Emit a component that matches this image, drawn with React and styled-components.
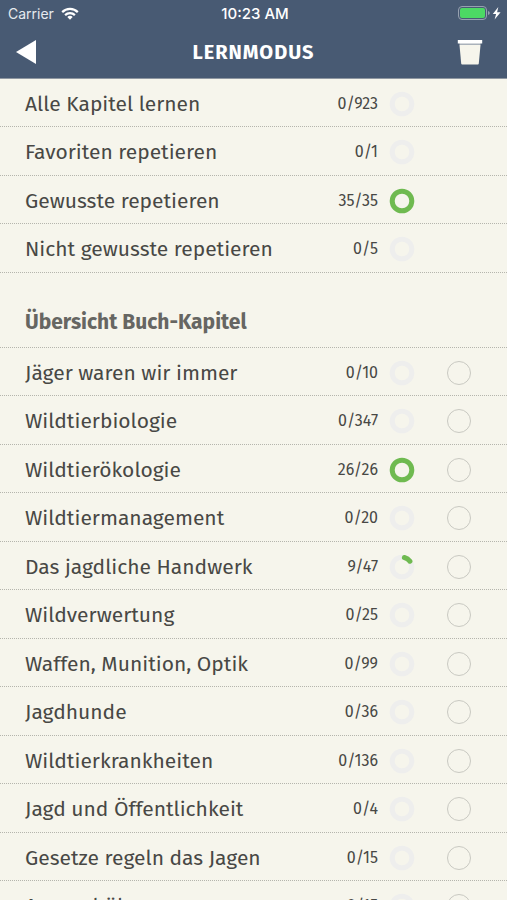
import { useState } from "react";
import React from 'react'
import styled, { createGlobalStyle } from "styled-components";

const overview = [
  { title: "Alle Kapitel lernen", known: 0, total: 923 },
  { title: "Favoriten repetieren", known: 0, total: 1 },
  { title: "Gewusste repetieren", known: 35, total: 35 },
  { title: "Nicht gewusste repetieren", known: 0, total: 5 },
]

const chapters = [
  { title: "Jäger waren wir immer", known: 0, total: 10 },
  { title: "Wildtierbiologie", known: 0, total: 347 },
  { title: "Wildtierökologie", known: 26, total: 26 },
  { title: "Wildtiermanagement", known: 0, total: 20 },
  { title: "Das jagdliche Handwerk", known: 9, total: 47 },
  { title: "Wildverwertung", known: 0, total: 25 },
  { title: "Waffen, Munition, Optik", known: 0, total: 99 },
  { title: "Jagdhunde", known: 0, total: 36 },
  { title: "Wildtierkrankheiten", known: 0, total: 136 },
  { title: "Jagd und Öffentlichkeit", known: 0, total: 4 },
  { title: "Gesetze regeln das Jagen", known: 0, total: 15 },
  { title: "Aussenhöhe", known: 0, total: 15 },
]

const RADIUS = 9.8
const STROKE = 5

function ProgressRing({ known, total }) {
  const length = 2 * Math.PI * RADIUS
  const complete = known === total
  // the round caps add one stroke width to the arc
  const part = complete ? length : (known / total) * length - STROKE
  const start = complete ? -90 : -76

  return (
    <Ring viewBox="0 0 26 26" strokeWidth={STROKE} aria-hidden="true">
      <circle cx="13" cy="13" r={RADIUS} stroke="#eeeeed" />
      {known > 0 && (
        <circle
          cx="13"
          cy="13"
          r={RADIUS}
          stroke="#6fba50"
          strokeLinecap="round"
          strokeDasharray={`${part} ${length}`}
          transform={`rotate(${start} 13 13)`}
        />
      )}
    </Ring>
  )
}

function LearnRow({ item, selectable, checked, onToggle }) {
  return (
    <Row>
      <Title href="#">{item.title}</Title>
      <Count>{item.known}/{item.total}</Count>
      <ProgressRing known={item.known} total={item.total} />
      <Choice>
        {selectable && (
          <Check type="checkbox" aria-label={item.title} checked={checked} onChange={onToggle} />
        )}
      </Choice>
    </Row>
  )
}

function App() {
  const [selected, setSelected] = useState([])

  const toggle = (title) => {
    setSelected(selected.includes(title) ? selected.filter((t) => t !== title) : [...selected, title])
  }

  return (
    <Container>
      <GlobalStyle />
      <Header>
        <StatusBar>
          <Carrier>
            Carrier
            <svg width="18" height="13" viewBox="0 0 18 13" fill="none" stroke="#fff" strokeWidth="2.2">
              <path d="M1.2 5.1a11 11 0 0 1 15.6 0" />
              <path d="M4.1 8.1a7 7 0 0 1 9.8 0" />
              <path d="M9 12.8L6.3 10.1a3.9 3.9 0 0 1 5.4 0z" fill="#fff" stroke="none" />
            </svg>
          </Carrier>
          <Time>10:23 AM</Time>
          <Battery>
            <svg width="44" height="14" viewBox="0 0 44 14">
              <rect x="0.5" y="0.5" width="28" height="13" rx="3.5" fill="none" stroke="#97a1b0" />
              <rect x="2" y="2" width="25" height="10" rx="2" fill="#4cd964" />
              <path d="M30 5v4q1.800-.5 1.800-2T30 5z" fill="#97a1b0" />
              <path d="M40.300 1L34.800 8h3.300l-1.500 5.600 6-7.400h-3.500z" fill="#fff" />
            </svg>
          </Battery>
        </StatusBar>
        <NavBar>
          <IconButton type="button" aria-label="Zurück">
            <svg width="20" height="24" viewBox="0 0 20 24"><path d="M20 0v24L0 12z" fill="#fff" /></svg>
          </IconButton>
          <Heading>LERNMODUS</Heading>
          <IconButton type="button" aria-label="Löschen" $end>
            <svg width="26" height="26" viewBox="0 0 26 26" fill="#f6f5ec">
              <path d="M2.500 4h21v2h-21z" fill="#a9b1ba" />
              <path d="M0.800 1h24.400v3.500H0.800z" fill="#fff" />
              <path d="M2.500 6h21l-1.700 18.500q-.1 1-1 1H5.200q-.9 0-1-1z" />
            </svg>
          </IconButton>
        </NavBar>
      </Header>
      <main>
        <List>
          {overview.map((item) => <LearnRow key={item.title} item={item} />)}
        </List>
        <SectionTitle>Übersicht Buch-Kapitel</SectionTitle>
        <List>
          {chapters.map((item) => (
            <LearnRow
              key={item.title}
              item={item}
              selectable
              checked={selected.includes(item.title)}
              onToggle={() => toggle(item.title)}
            />
          ))}
        </List>
      </main>
    </Container>
  )
}

export default App

const GlobalStyle = createGlobalStyle`
  * {
    box-sizing: border-box;
  }
  body {
    margin: 0;
    background: #f6f5ec;
    color: #484845;
    font-family: "Fira Sans", "Noto Sans", sans-serif;
  }
`

const Container = styled.div`
  height: 100vh;
  overflow: hidden;
`

const Header = styled.header`
  background: #485a73;
  color: #fff;
  border-bottom: 1px solid #8f97a1;
`

const StatusBar = styled.div`
  display: grid;
  grid-template-columns: 1fr auto 1fr;
  align-items: center;
  height: 26px;
  padding: 0 5px 0 8px;
  font-family: Inter, sans-serif;
  font-size: 14px;
`

const Carrier = styled.div`
  display: flex;
  align-items: center;
  gap: 7px;
  color: #e6eaef;
`

const Time = styled.span`
  font-size: 15px;
  font-weight: 500;
`

const Battery = styled.div`
  display: flex;
  justify-content: flex-end;
`

const NavBar = styled.div`
  display: grid;
  grid-template-columns: 1fr auto 1fr;
  align-items: center;
  height: 52px;
  padding: 0 24px 0 16px;
`

const IconButton = styled.button`
  display: flex;
  justify-self: ${(props) => (props.$end ? "end" : "start")};
  padding: 0;
  border: 0;
  background: none;
  cursor: pointer;
`

const Heading = styled.h1`
  margin: 0;
  padding-left: 8px;
  font-size: 20px;
  line-height: 28px;
  font-weight: 700;
  letter-spacing: 1px;
`

const List = styled.ul`
  margin: 0;
  padding: 0;
  list-style: none;
`

const Row = styled.li`
  display: flex;
  align-items: center;
  height: 48px;
  padding: 2px 36px 0 25px;
  border-bottom: 1px dotted #b5b5ad;

  &:nth-child(even) {
    height: 49px;
  }
`

const Title = styled.a`
  flex: 1;
  color: inherit;
  font-size: 21px;
  line-height: 28px;
  text-decoration: none;
`

const Count = styled.span`
  font-size: 16px;
  line-height: 20px;
  font-variant-numeric: lining-nums;
`

const Ring = styled.svg`
  width: 26px;
  height: 26px;
  margin-left: 11px;
  fill: none;
`

const Choice = styled.div`
  display: flex;
  justify-content: flex-end;
  width: 56px;
`

const Check = styled.input`
  appearance: none;
  width: 24px;
  height: 24px;
  margin: 0;
  border: 1px solid #c9c9c2;
  border-radius: 50%;
  cursor: pointer;

  &:checked {
    background: #6fba50;
    border-color: #6fba50;
  }
`

const SectionTitle = styled.h2`
  display: flex;
  align-items: flex-end;
  height: 75px;
  margin: 0;
  padding: 0 25px 11px;
  border-bottom: 1px dotted #b5b5ad;
  color: #666662;
  font-size: 21px;
  line-height: 28px;
  font-weight: 700;
`
